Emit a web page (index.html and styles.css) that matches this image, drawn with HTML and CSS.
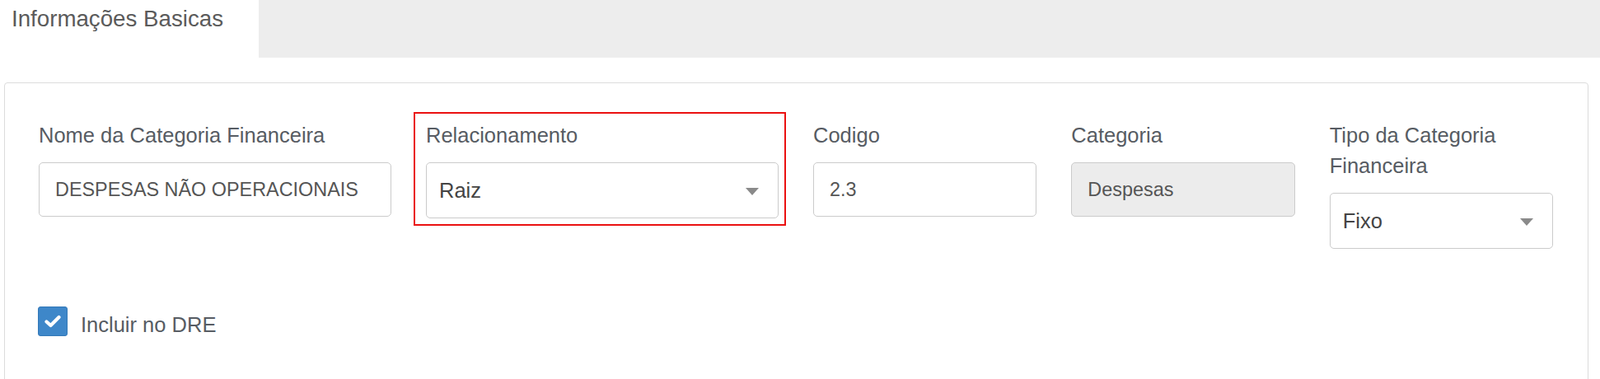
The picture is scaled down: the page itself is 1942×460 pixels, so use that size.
FILE: index.html
```html
<!DOCTYPE html>
<html lang="pt-BR">
<head>
<meta charset="utf-8">
<title>Categoria Financeira</title>
<link rel="stylesheet" href="styles.css">
</head>
<body>
  <div class="tabs">
    <div class="tab active">Informações Basicas</div>
    <div class="tab-rest"></div>
  </div>
  <div class="card">
    <div class="form-row">
      <div class="col">
        <label class="lbl">Nome da Categoria Financeira</label>
        <input class="input" type="text" value="DESPESAS NÃO OPERACIONAIS" readonly>
      </div>
      <div class="col highlighted">
        <label class="lbl">Relacionamento</label>
        <div class="select"><span class="select-text">Raiz</span><span class="arrow"></span></div>
      </div>
      <div class="col">
        <label class="lbl">Codigo</label>
        <input class="input" type="text" value="2.3" readonly>
      </div>
      <div class="col">
        <label class="lbl">Categoria</label>
        <input class="input disabled" type="text" value="Despesas" disabled>
      </div>
      <div class="col">
        <label class="lbl">Tipo da Categoria<br>Financeira</label>
        <div class="select"><span class="select-text">Fixo</span><span class="arrow"></span></div>
      </div>
    </div>
    <div class="check-row">
      <span class="checkbox">
        <svg width="20" height="16" viewBox="0 0 20 16"><path d="M2.5 8.5 L7.5 13 L17.5 3" fill="none" stroke="#fff" stroke-width="4.2" stroke-linecap="round" stroke-linejoin="round"/></svg>
      </span>
      <span class="check-label">Incluir no DRE</span>
    </div>
  </div>
</body>
</html>
```
FILE: styles.css
```css
html, body {
  margin: 0;
  padding: 0;
  background: #fff;
  font-family: "Liberation Sans", Arial, sans-serif;
}

.tabs {
  display: flex;
  height: 70px;
  background: #ededed;
}

.tab.active {
  width: 300px;
  padding: 4px 0 0 14px;
  background: #fff;
  font-size: 27.7px;
  line-height: 38px;
  color: #5b5b5b;
}

.tab-rest {
  flex: 1;
}

.card {
  margin: 30px 14px 0 5px;
  height: 361px;
  border: 1px solid #dcdcdc;
  border-radius: 4px 4px 0 0;
  padding: 45px 21px 0 20px;
  box-sizing: border-box;
}

.form-row {
  display: grid;
  grid-template-columns: minmax(0, 3fr) minmax(0, 3fr) minmax(0, 2fr) minmax(0, 2fr) minmax(0, 2fr);
  align-items: start;
}

.col {
  padding: 0 21px;
  min-width: 0;
}

.highlighted {
  position: relative;
}

.highlighted::after {
  content: "";
  position: absolute;
  left: 6px;
  top: -10px;
  width: 448px;
  height: 134px;
  border: 2px solid #ea1111;
  pointer-events: none;
}

.lbl {
  display: block;
  font-size: 25.5px;
  line-height: 37px;
  color: #575c63;
  margin-bottom: 14px;
}

.input {
  display: block;
  width: 100%;
  height: 66px;
  box-sizing: border-box;
  border: 1px solid #cbcbcb;
  border-radius: 5px;
  padding: 0 19px;
  font-family: "Liberation Sans", Arial, sans-serif;
  font-size: 23.4px;
  color: #555;
  background: #fff;
  outline: none;
}

.input.disabled {
  background: #ececec;
  color: #555;
  -webkit-text-fill-color: #555;
  opacity: 1;
}

.select {
  display: flex;
  align-items: center;
  justify-content: space-between;
  height: 68px;
  box-sizing: border-box;
  border: 1px solid #cbcbcb;
  border-radius: 5px;
  padding: 0 23px 0 15px;
  background: #fff;
}

.select-text {
  font-size: 25.5px;
  color: #444;
}

.arrow {
  width: 0;
  height: 0;
  margin-top: 2px;
  border-top: 9px solid #8a8a8a;
  border-left: 8.5px solid transparent;
  border-right: 8.5px solid transparent;
}

.check-row {
  display: flex;
  align-items: flex-start;
  margin-top: 70px;
  padding-left: 20px;
}

.checkbox {
  display: flex;
  align-items: center;
  justify-content: center;
  width: 36px;
  height: 36px;
  box-sizing: border-box;
  background: #3e87c9;
  border: 1px solid #3479b8;
  border-radius: 3px;
}

.check-label {
  margin: 4px 0 0 16px;
  font-size: 25.5px;
  line-height: 37px;
  color: #575c63;
}
```
